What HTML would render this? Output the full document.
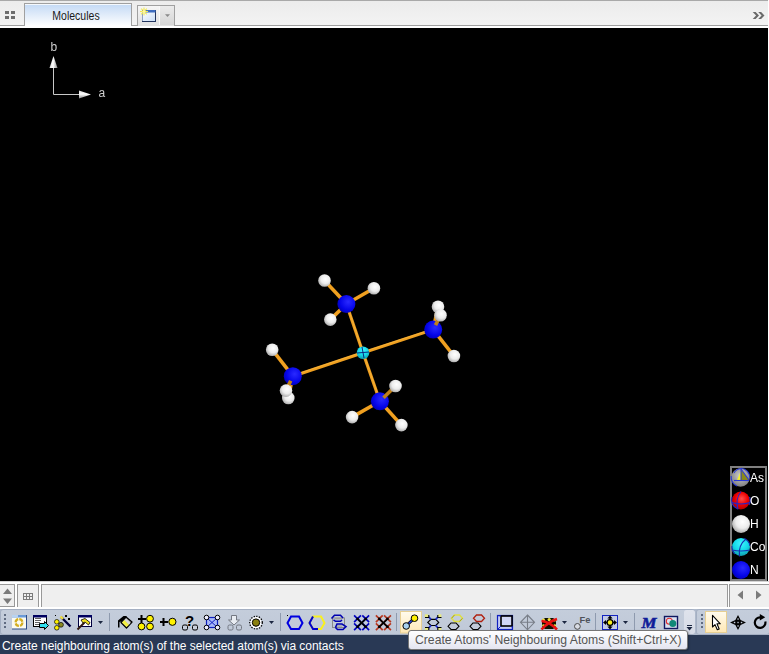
<!DOCTYPE html>
<html><head><meta charset="utf-8">
<style>
*{box-sizing:border-box;margin:0;padding:0}
html,body{width:769px;height:654px;overflow:hidden;background:#f0f0f0;font-family:"Liberation Sans",sans-serif}
.a{position:absolute}
#tabbar{left:0;top:0;width:769px;height:28px;background:linear-gradient(#ececec,#f4f4f4);border-top:1px solid #a9a9a9}
#tabline{left:0;top:25px;width:768px;height:1px;background:#a0a0a0}
#tabwhite{left:0;top:26px;width:769px;height:2px;background:#fff}
#tab{left:24px;top:3px;width:108px;height:23px;border:1px solid #a0a0a0;border-bottom:none;background:linear-gradient(#c3d9f5,#ffffff);box-shadow:inset 0 1px 0 #f4f8fd}
#tabt{left:0;top:8px;width:152px;font-size:12px;color:#1a1a1a;text-align:center;line-height:16px;white-space:nowrap;transform:scaleX(0.875);transform-origin:76px 0}
#view{left:0;top:28px;width:768px;height:553px;background:#000}
#rcol{left:768px;top:0;width:1px;height:581px;background:#fff}
#panel{left:0;top:581px;width:769px;height:28px;background:#fff;border-top:1px solid #d4d4d4}
.box{top:584px;height:23px;border:1px solid #999;border-bottom:none;background:#efefef}
#tb{left:0;top:609px;width:769px;height:26px;background:linear-gradient(#c8d1e0,#bcc7d8);border-top:1px solid #a9b6cb}
#status{left:0;top:635px;width:769px;height:19px;background:#293955;color:#fff;font-size:12px;line-height:23px;padding-left:2px;white-space:nowrap;letter-spacing:-0.05px}
#tip{left:408px;top:630px;width:280px;height:20px;border:1px solid #767676;border-radius:3px;background:linear-gradient(#ffffff,#e4e5f0);font-size:12.2px;color:#555;line-height:19.5px;padding-left:6px;white-space:nowrap;box-shadow:1px 1px 2px rgba(0,0,0,.3)}
</style></head><body>
<div id="tabbar" class="a"></div>
<div id="tabline" class="a"></div>
<div id="tabwhite" class="a"></div>
<!-- grid icon -->
<svg class="a" style="left:0;top:0" width="24" height="26"><g fill="#6e6e6e"><rect x="5" y="11" width="4" height="3"/><rect x="11" y="11" width="4" height="3"/><rect x="5" y="16" width="4" height="3"/><rect x="11" y="16" width="4" height="3"/></g></svg>
<div id="tab" class="a"></div><div id="tabt" class="a">Molecules</div>
<!-- new window button -->
<div class="a" style="left:137px;top:5px;width:38px;height:21px;border:1px solid #a0a0a0;border-bottom:none;background:linear-gradient(#f6f6f6,#e0e0e0)"></div>
<div class="a" style="left:159px;top:6px;width:15px;height:19px;background:linear-gradient(#ebebeb,#d6d6d6);border-left:1px solid #f8f8f8"></div>
<svg class="a" style="left:138px;top:6px" width="36" height="20">
 <defs><linearGradient id="wb" x1="0" y1="0" x2="1" y2="1"><stop offset="0" stop-color="#ffffff"/><stop offset="1" stop-color="#c8dcf6"/></linearGradient></defs>
 <rect x="4.5" y="4.5" width="13" height="11" fill="url(#wb)" stroke="#22345e"/>
 <line x1="4.5" y1="5" x2="4.5" y2="15" stroke="#8ea0c0"/>
 <rect x="5" y="4" width="12.5" height="2.5" fill="#3d6cc0"/>
 <g stroke="#f2ea50" stroke-width="1.1"><line x1="6" y1="1.5" x2="6" y2="9.5"/><line x1="2" y1="5.5" x2="10" y2="5.5"/><line x1="3.2" y1="2.7" x2="8.8" y2="8.3"/><line x1="8.8" y1="2.7" x2="3.2" y2="8.3"/></g>
 <circle cx="6" cy="5.5" r="1.5" fill="#fff8a0"/>
 <path d="M27 8.2 L32 8.2 L29.5 11 Z" fill="#8a8a8a"/>
</svg>
<!-- chevrons -->
<svg class="a" style="left:750px;top:10px" width="18" height="12"><path d="M2.7 2 L5.6 2 L9 5.5 L5.6 9 L2.7 9 L6.1 5.5 Z M8.2 2 L11.1 2 L14.5 5.5 L11.1 9 L8.2 9 L11.6 5.5 Z" fill="#6a6a6a"/></svg>

<div id="view" class="a"></div>
<div id="rcol" class="a"></div>
<svg class="a" style="left:0;top:28px;will-change:transform" width="768" height="553" viewBox="0 28 768 553">
 <defs>
  <radialGradient id="gH" cx="0.58" cy="0.38" r="0.72"><stop offset="0" stop-color="#ffffff"/><stop offset="0.5" stop-color="#ececec"/><stop offset="1" stop-color="#9a9a9a"/></radialGradient>
  <radialGradient id="gN" cx="0.6" cy="0.38" r="0.75"><stop offset="0" stop-color="#2a2aff"/><stop offset="0.6" stop-color="#0404e8"/><stop offset="1" stop-color="#0000a0"/></radialGradient>
  <radialGradient id="gCo" cx="0.5" cy="0.3" r="0.8"><stop offset="0" stop-color="#40f4ff"/><stop offset="0.5" stop-color="#14d8e8"/><stop offset="1" stop-color="#108a98"/></radialGradient>
  <radialGradient id="gO" cx="0.55" cy="0.4" r="0.7"><stop offset="0" stop-color="#ff5050"/><stop offset="0.5" stop-color="#ee0000"/><stop offset="1" stop-color="#900000"/></radialGradient>
  <radialGradient id="gAs" cx="0.5" cy="0.4" r="0.7"><stop offset="0" stop-color="#d0d0d0"/><stop offset="1" stop-color="#707070"/></radialGradient>
 </defs>
 <!-- axes -->
 <g stroke="#c8c8c8" stroke-width="1" fill="none"><line x1="53.5" y1="94.5" x2="53.5" y2="62"/><line x1="53.5" y1="94.5" x2="85" y2="94.5"/></g>
 <linearGradient id="ab" x1="0" y1="0" x2="1" y2="0"><stop offset="0" stop-color="#d8d8d8"/><stop offset="0.45" stop-color="#ffffff"/><stop offset="1" stop-color="#8a8a8a"/></linearGradient><linearGradient id="aa" x1="0" y1="0" x2="0" y2="1"><stop offset="0" stop-color="#d8d8d8"/><stop offset="0.45" stop-color="#ffffff"/><stop offset="1" stop-color="#8a8a8a"/></linearGradient>
 <path d="M53.5 56 L57.5 68 L49.5 68 Z" fill="url(#ab)"/>
 <path d="M91 94.5 L79 90.5 L79 98.5 Z" fill="url(#aa)"/>
 <text x="50.5" y="51" font-size="12" fill="#d0d0d0" font-family="Liberation Sans">b</text>
 <text x="98.5" y="97" font-size="12" fill="#d0d0d0" font-family="Liberation Sans">a</text>
 <!-- bonds -->
 <g stroke="#f0a020" stroke-width="3.1">
  <line x1="363" y1="352.7" x2="346.4" y2="304.0"/>
  <line x1="363" y1="352.7" x2="433.2" y2="329.6"/>
  <line x1="363" y1="352.7" x2="292.8" y2="376.2"/>
  <line x1="363" y1="352.7" x2="379.9" y2="401.3"/>
 </g>
 <g stroke="#f0a020" stroke-width="3.6">
  <line x1="346.4" y1="304.0" x2="324.5" y2="280.5"/>
  <line x1="346.4" y1="304.0" x2="373.9" y2="288.3"/>
  <line x1="346.4" y1="304.0" x2="330.3" y2="319.6"/>
  <line x1="433.2" y1="329.6" x2="438" y2="306.8"/>
  <line x1="433.2" y1="329.6" x2="453.9" y2="356"/>
  <line x1="292.8" y1="376.2" x2="272.2" y2="349.7"/>
  <line x1="292.8" y1="376.2" x2="288.3" y2="398"/>
  <line x1="379.9" y1="401.3" x2="352.1" y2="417.1"/>
  <line x1="379.9" y1="401.3" x2="401.4" y2="425.1"/>
 </g>
 <g stroke="#f8c050" stroke-width="1" opacity="0.5">
  <line x1="363" y1="351.9" x2="346.4" y2="303.2"/>
  <line x1="363" y1="351.9" x2="433.2" y2="328.8"/>
  <line x1="363" y1="351.9" x2="292.8" y2="375.4"/>
  <line x1="363" y1="351.9" x2="379.9" y2="400.5"/>
 </g>
 <!-- back H -->
 <circle cx="438" cy="306.8" r="6.3" fill="url(#gH)"/>
 <circle cx="288.3" cy="398" r="6.3" fill="url(#gH)"/>
 <!-- N atoms -->
 <circle cx="346.4" cy="304.0" r="9" fill="url(#gN)"/>
 <circle cx="433.2" cy="329.6" r="9" fill="url(#gN)"/>
 <circle cx="292.8" cy="376.2" r="9" fill="url(#gN)"/>
 <circle cx="379.9" cy="401.3" r="9" fill="url(#gN)"/>
 <g stroke="#c08018" stroke-width="3.6">
  <line x1="435.5" y1="325.1" x2="440.5" y2="315.3"/>
  <line x1="290.7" y1="380.7" x2="286" y2="390.6"/>
  <line x1="383.5" y1="397.8" x2="395.5" y2="386"/>
 </g>
 <!-- H atoms -->
 <circle cx="324.5" cy="280.5" r="6.3" fill="url(#gH)"/>
 <circle cx="373.9" cy="288.3" r="6.3" fill="url(#gH)"/>
 <circle cx="330.3" cy="319.6" r="6.3" fill="url(#gH)"/>
 <circle cx="440.5" cy="315.3" r="6.3" fill="url(#gH)"/>
 <circle cx="453.9" cy="356" r="6.3" fill="url(#gH)"/>
 <circle cx="272.2" cy="349.7" r="6.3" fill="url(#gH)"/>
 <circle cx="286" cy="390.6" r="6.3" fill="url(#gH)"/>
 <circle cx="395.5" cy="386" r="6.3" fill="url(#gH)"/>
 <circle cx="352.1" cy="417.1" r="6.3" fill="url(#gH)"/>
 <circle cx="401.4" cy="425.1" r="6.3" fill="url(#gH)"/>
 <!-- Co -->
 <circle cx="363" cy="352.7" r="6.3" fill="url(#gCo)"/>
 <g stroke="#0a2a80" stroke-width="1"><line x1="357" y1="353" x2="369" y2="352"/><line x1="362" y1="347" x2="364" y2="358"/></g>
 <!-- legend -->
 <rect x="731" y="467" width="35" height="113" fill="none" stroke="#808080" stroke-width="2"/>
 <circle cx="740.5" cy="477.5" r="9.3" fill="url(#gAs)"/>
 <path d="M741 469.5 L749 480 L741 480 Z" fill="#8c8a18"/>
 <path d="M741 470.5 L741 480 L737 480 Z" fill="#f4f030"/>
 <g fill="none" stroke="#2838d8" stroke-width="1.1"><path d="M741 468.2 A9.3 9.3 0 0 1 749.8 478"/><path d="M737 486 A9.3 9.3 0 0 1 731.2 476"/><line x1="734" y1="480.5" x2="749" y2="480.5"/><line x1="741" y1="469" x2="741" y2="480.5"/><line x1="741" y1="469" x2="749" y2="480"/><path d="M734 473 Q736 469 741 468.5"/></g>
 <circle cx="740.8" cy="500.5" r="9" fill="url(#gO)"/>
 <g fill="none" stroke="#2424c8" stroke-width="1.1"><path d="M732 497 A9 9 0 0 0 737 508.5" /><path d="M749.5 497 A9 9 0 0 1 749 505"/><path d="M732 502.5 Q741 505.5 750 502.5"/><path d="M741 491.5 Q735 499 738 509.5"/></g>
 <circle cx="741" cy="524" r="9" fill="url(#gH)"/>
 <circle cx="741" cy="547" r="9" fill="url(#gCo)"/>
 <g fill="none" stroke="#1830b0" stroke-width="1.1"><path d="M732 550 Q741 552 750 550"/><path d="M746 539 Q738 545 739.5 556.5"/><path d="M732 546 A9 9 0 0 0 735 554"/><path d="M744 538.5 A9 9 0 0 1 750 546"/></g>
 <circle cx="741" cy="570" r="9" fill="url(#gN)"/>
 <g font-size="12" fill="#ffffff" font-family="Liberation Sans">
  <text x="750" y="482">As</text><text x="750" y="505">O</text><text x="750" y="528">H</text><text x="750" y="551">Co</text><text x="750" y="574">N</text>
 </g>
</svg>

<div id="panel" class="a"></div>
<div class="a box" style="left:0;width:15px;border-left:none;border-bottom:1px solid #999"></div>
<div class="a box" style="left:17px;width:22px"></div>
<div class="a box" style="left:41px;width:687px"></div>
<div class="a box" style="left:729px;width:40px;border-right:none"></div>
<svg class="a" style="left:0;top:584px" width="769" height="23">
 <path d="M3 10 L7.5 4.5 L12 10 Z M3 14.5 L12 14.5 L7.5 20 Z" fill="#7b7b7b"/>
 <g fill="none" stroke="#7b7b7b" stroke-width="1"><rect x="23.5" y="9.5" width="9" height="6"/><line x1="26.5" y1="9.5" x2="26.5" y2="15.5"/><line x1="29.5" y1="9.5" x2="29.5" y2="15.5"/><line x1="23.5" y1="12.5" x2="32.5" y2="12.5"/></g>
 <path d="M743 6.5 L743 15.5 L737.5 11 Z M756 6.5 L756 15.5 L761.5 11 Z" fill="#7b7b7b"/>
</svg>

<div id="tb" class="a"></div>
<svg class="a" style="left:0;top:609px" width="769" height="26" viewBox="0 609 769 26">
 <defs>
  <linearGradient id="tbg" x1="0" y1="0" x2="0" y2="1"><stop offset="0" stop-color="#c4cddb"/><stop offset="1" stop-color="#c0c9d8"/></linearGradient>
  <linearGradient id="hot" x1="0" y1="0" x2="0" y2="1"><stop offset="0" stop-color="#fffbee"/><stop offset="1" stop-color="#ffe8b4"/></linearGradient>
  <linearGradient id="ov" x1="0" y1="0" x2="0" y2="1"><stop offset="0" stop-color="#dfe3ec"/><stop offset="1" stop-color="#d6dbe6"/></linearGradient>
 </defs>
 <rect x="0" y="609" width="769" height="26" fill="#aeb9cb"/>
 <rect x="0.5" y="609.5" width="694" height="25" rx="2.5" fill="url(#tbg)" stroke="#a4afc2"/>
 <rect x="684" y="610" width="11" height="24" rx="2.5" fill="url(#ov)"/>
 <rect x="696.5" y="609.5" width="73" height="25" rx="2.5" fill="url(#tbg)" stroke="#a4afc2"/>
 <!-- grips -->
 <g fill="#5f6b80"><rect x="4" y="614" width="2" height="2"/><rect x="4" y="618" width="2" height="2"/><rect x="4" y="622" width="2" height="2"/><rect x="4" y="626" width="2" height="2"/>
 <rect x="701" y="614" width="2" height="2"/><rect x="701" y="618" width="2" height="2"/><rect x="701" y="622" width="2" height="2"/><rect x="701" y="626" width="2" height="2"/></g>
 <!-- separators -->
 <g stroke="#8e9aae" stroke-width="1"><line x1="109.5" y1="613" x2="109.5" y2="631"/><line x1="280.5" y1="613" x2="280.5" y2="631"/><line x1="396.5" y1="613" x2="396.5" y2="631"/><line x1="490.5" y1="613" x2="490.5" y2="631"/><line x1="595.5" y1="613" x2="595.5" y2="631"/><line x1="634.5" y1="613" x2="634.5" y2="631"/></g>
 <!-- hot buttons -->
 <rect x="400.5" y="611.5" width="21" height="21.5" fill="url(#hot)" stroke="#e6cf93"/>
 <rect x="705.5" y="611.5" width="21" height="21" fill="url(#hot)" stroke="#e6cf93"/>
 <!-- dropdown arrows -->
 <g fill="#1b2640"><path d="M98 621 L103 621 L100.5 624 Z"/><path d="M269 621 L274 621 L271.5 624 Z"/><path d="M562 621 L567 621 L564.5 624 Z"/><path d="M623 621 L628 621 L625.5 624 Z"/></g>
 <!-- overflow -->
 <g fill="#1b2640"><rect x="687" y="625" width="5" height="1"/><path d="M686.5 627 L692.5 627 L689.5 630.5 Z"/></g>
 <!-- icon1 refresh window -->
 <rect x="12" y="615" width="15" height="14.5" fill="#2c4a86"/>
 <rect x="12" y="615" width="14" height="13.5" fill="#fbfbf0"/>
 <rect x="12" y="615" width="14" height="2.5" fill="#6a9ad8"/>
 <rect x="12" y="615" width="6" height="2.5" fill="#b8d2f0"/>
 <circle cx="19" cy="622.5" r="3.4" fill="none" stroke="#d4ae20" stroke-width="2.2" stroke-dasharray="4.2 1.1"/>
 <!-- icon2 window arrow -->
 <rect x="33.5" y="615.5" width="13" height="11" fill="#fff" stroke="#000"/>
 <rect x="33" y="615" width="14" height="2.5" fill="#000060"/>
 <g stroke="#606060"><line x1="35" y1="618.5" x2="41" y2="618.5"/><line x1="35" y1="620.5" x2="41" y2="620.5"/><line x1="35" y1="622.5" x2="40" y2="622.5"/><line x1="35" y1="624.5" x2="40" y2="624.5"/></g>
 <path d="M39.5 623.5 L44.5 623.5 L44.5 621.5 L48.5 625.5 L44.5 629.5 L44.5 627.5 L39.5 627.5 Z" fill="#30e0f0" stroke="#000" stroke-width="1"/>
 <!-- icon3 wand -->
 <g stroke="#000" stroke-width="0.7"><circle cx="56.8" cy="621.8" r="2.3" fill="#fff200"/><circle cx="56.8" cy="627.8" r="2.3" fill="#fff200"/><circle cx="61" cy="624.8" r="2.4" fill="#8a8a20"/></g>
 <line x1="61" y1="617" x2="70.5" y2="626.5" stroke="#000040" stroke-width="2.4"/>
 <line x1="60.5" y1="616.5" x2="63" y2="619" stroke="#f0e040" stroke-width="2.4"/>
 <g fill="#000"><rect x="65" y="615" width="2" height="2"/><rect x="68" y="618" width="2" height="2"/><rect x="55" y="615" width="1" height="1"/></g>
 <!-- icon4 hammer window -->
 <rect x="78.5" y="615.5" width="13" height="11" fill="#fff" stroke="#000040"/>
 <rect x="78" y="615" width="14" height="2.5" fill="#000060"/>
 <line x1="77.5" y1="629.5" x2="84.5" y2="622.5" stroke="#301810" stroke-width="2"/>
 <path d="M81 620 L85 618.5 L90 622.5 L88.5 625 L85 622 L83 623 Z" fill="#f0e020" stroke="#000" stroke-width="0.8"/>
 <!-- icon5 eraser -->
 <path d="M118 627.5 L118 620.5 L123.5 616 L127 616 L121.5 621.5 L119.5 622 L119.5 627.5 Z" fill="#000"/>
 <path d="M121 622.5 L126 617 L132 622 L126.5 628 Z" fill="#a8a8a8" stroke="#000" stroke-width="1.3" stroke-linejoin="round"/>
 <path d="M122 622.5 L124.5 620 L129 624.7 L126.5 627 Z" fill="#f2f040"/>
 <path d="M124.5 620 L126 618.5 L130.5 623 L129 624.7 Z" fill="#d8d8d8"/>
 <!-- icon6 plus atoms -->
 <g stroke="#000" stroke-width="1"><circle cx="150" cy="618.7" r="3.4" fill="#fff200"/><circle cx="141.5" cy="626.5" r="3.4" fill="#fff200"/><circle cx="150" cy="626.5" r="3.4" fill="#fff200"/></g>
 <g fill="#000"><rect x="138" y="618" width="8" height="2"/><rect x="140.5" y="615" width="2" height="8"/></g>
 <!-- icon7 +o -->
 <g fill="#000"><rect x="160" y="621" width="8" height="2"/><rect x="162.5" y="618" width="2" height="8"/></g>
 <circle cx="172.4" cy="621.8" r="3.6" fill="#fff200" stroke="#000"/>
 <!-- icon8 ?oo -->
 <text x="185" y="625.5" font-family="Liberation Sans" font-weight="bold" font-size="15" fill="#000">?</text>
 <g fill="#c8cfdc" stroke="#000" stroke-width="1"><rect x="182.5" y="625" width="5" height="5" rx="1.5"/><rect x="192.5" y="625" width="5" height="5" rx="1.5"/></g>
 <!-- icon9 blue box -->
 <rect x="206.5" y="617.5" width="11" height="10" fill="#a8b8f8" stroke="#1020c0" stroke-width="1.2"/>
 <g stroke="#1020c0"><line x1="206.5" y1="617.5" x2="217.5" y2="627.5"/><line x1="217.5" y1="617.5" x2="206.5" y2="627.5"/></g>
 <g fill="#eef" stroke="#000" stroke-width="1"><circle cx="206.5" cy="617.5" r="2.3"/><circle cx="217.5" cy="617.5" r="2.3"/><circle cx="206.5" cy="627.5" r="2.3"/><circle cx="217.5" cy="627.5" r="2.3"/></g>
 <!-- icon10 disabled -->
 <path d="M231.5 615.5 L236.5 615.5 L236.5 620 L239.5 620 L234 625 L228.5 620 L231.5 620 Z" fill="#e8ecf2" stroke="#737882"/>
 <g fill="none" stroke="#737882"><rect x="228" y="625" width="5" height="5" rx="1.5"/><rect x="236.5" y="625" width="5" height="5" rx="1.5"/></g>
 <!-- icon11 dotted circle -->
 <circle cx="256" cy="622.6" r="5.8" fill="#fff"/><circle cx="256" cy="622.6" r="6.3" fill="none" stroke="#000" stroke-width="1.3" stroke-dasharray="1.3 1.35"/>
 <circle cx="256" cy="622.6" r="3.7" fill="#8a8010" stroke="#000" stroke-width="1"/>
 <!-- hexagons -->
 <path d="M291 616.5 L299 616.5 L302.5 623 L299 629 L291 629 L287.5 623 Z" fill="none" stroke="#0000e0" stroke-width="2"/>
 <rect x="287" y="615" width="1" height="1" fill="#000"/>
 <path d="M313 616.5 L321 616.5 L324.5 623 L321 629 L313 629 L309.5 623 Z" fill="none" stroke="#f8f020" stroke-width="2"/>
 <path d="M313 616.5 L309.5 623 L313 629 L318 629" fill="none" stroke="#0000d0" stroke-width="2"/>
 <!-- stacked hex -->
 <rect x="332.5" y="618" width="12" height="9.5" fill="none" stroke="#8a8a8a" stroke-width="1"/>
 <g stroke="#9a9a9a" stroke-width="1.2"><line x1="335" y1="618.8" x2="342" y2="618.8"/><line x1="337" y1="626" x2="342" y2="626"/></g>
 <path d="M331.5 618.5 L334.5 615.3 L340.5 615.3 L343 618 M333.5 619.8 L335.5 621.3 L340.5 621.3 L342 620 M335.5 627.5 L337 624 L342 624 L346 626.6 L343 629.5 L337.5 629.5 L335.5 627.5" fill="none" stroke="#0000b0" stroke-width="1.6"/>
 <!-- XX -->
<g stroke="#0000c0" stroke-width="1.7"><line x1="354.1" y1="615.4" x2="360.9" y2="622.1999999999999"/><line x1="360.9" y1="615.4" x2="354.1" y2="622.1999999999999"/><line x1="362.3" y1="615.4" x2="369.09999999999997" y2="622.1999999999999"/><line x1="369.09999999999997" y1="615.4" x2="362.3" y2="622.1999999999999"/><line x1="354.1" y1="623.4" x2="360.9" y2="630.1999999999999"/><line x1="360.9" y1="623.4" x2="354.1" y2="630.1999999999999"/><line x1="362.3" y1="623.4" x2="369.09999999999997" y2="630.1999999999999"/><line x1="369.09999999999997" y1="623.4" x2="362.3" y2="630.1999999999999"/></g><g stroke="#000" stroke-width="1.7"><line x1="357.5" y1="618.8" x2="365.7" y2="626.8"/><line x1="365.7" y1="618.8" x2="357.5" y2="626.8"/></g><g fill="#000"><rect x="356.3" y="617.5999999999999" width="2.4" height="2.4"/><rect x="364.5" y="617.5999999999999" width="2.4" height="2.4"/><rect x="356.3" y="625.5999999999999" width="2.4" height="2.4"/><rect x="364.5" y="625.5999999999999" width="2.4" height="2.4"/></g>
<g stroke="#b83820" stroke-width="1.7"><line x1="375.90000000000003" y1="615.4" x2="382.7" y2="622.1999999999999"/><line x1="382.7" y1="615.4" x2="375.90000000000003" y2="622.1999999999999"/><line x1="384.1" y1="615.4" x2="390.9" y2="622.1999999999999"/><line x1="390.9" y1="615.4" x2="384.1" y2="622.1999999999999"/><line x1="375.90000000000003" y1="623.4" x2="382.7" y2="630.1999999999999"/><line x1="382.7" y1="623.4" x2="375.90000000000003" y2="630.1999999999999"/><line x1="384.1" y1="623.4" x2="390.9" y2="630.1999999999999"/><line x1="390.9" y1="623.4" x2="384.1" y2="630.1999999999999"/></g><g stroke="#000" stroke-width="1.7"><line x1="379.3" y1="618.8" x2="387.5" y2="626.8"/><line x1="387.5" y1="618.8" x2="379.3" y2="626.8"/></g><g fill="#000"><rect x="378.1" y="617.5999999999999" width="2.4" height="2.4"/><rect x="386.3" y="617.5999999999999" width="2.4" height="2.4"/><rect x="378.1" y="625.5999999999999" width="2.4" height="2.4"/><rect x="386.3" y="625.5999999999999" width="2.4" height="2.4"/></g>
 <!-- ball-stick hot icon -->
 <line x1="406" y1="626" x2="414.5" y2="618" stroke="#000" stroke-width="3"/>
 <line x1="406" y1="626" x2="414.5" y2="618" stroke="#2040e0" stroke-width="1.5"/>
 <circle cx="414.5" cy="618.2" r="3.3" fill="#fff200" stroke="#000"/>
 <circle cx="406.2" cy="626" r="3.3" fill="#a8d0f0" stroke="#000"/>
 <!-- benzene -->
 <g fill="#eef070" opacity="0.85"><rect x="424.8" y="614.3" width="3.4" height="3"/><rect x="438" y="614.3" width="3.4" height="3"/><rect x="424.8" y="627.8" width="3.4" height="3"/><rect x="438" y="627.8" width="3.4" height="3"/></g>
 <path d="M427.8 622.4 L430.9 619.3 L435.8 619.3 L438.7 622.4 L435.8 625.5 L430.9 625.5 Z" fill="none" stroke="#000" stroke-width="1.2"/>
 <g stroke="#2030d0" stroke-width="1.8"><line x1="431" y1="619.5" x2="428.7" y2="616.8"/><line x1="435.7" y1="619.5" x2="438" y2="616.8"/><line x1="431" y1="625.3" x2="428.7" y2="628"/><line x1="435.7" y1="625.3" x2="438" y2="628"/></g>
 <path d="M425 617.5 L428.8 617.5 M428.8 615 L428.8 618 M437.8 617.5 L441.5 617.5 M437.8 615 L437.8 618 M425 627.5 L428.8 627.5 M428.8 627 L428.8 630 M437.8 627.5 L441.5 627.5 M437.8 627 L437.8 630" fill="none" stroke="#000" stroke-width="1.1"/>
 <!-- yellow/black hex -->
 <path d="M451.5 618.3 L454.5 615 L459.5 615 L462.5 618.3 L459.5 621.5 L454.5 621.5 Z" fill="none" stroke="#e0e040" stroke-width="1.4"/>
 <path d="M451.5 618.3 L454.5 615 M459.5 621.5 L462.5 618.3" fill="none" stroke="#8a8a20" stroke-width="0.7"/>
 <path d="M448 626.3 L451 623 L456 623 L459 626.3 L456 629.5 L451 629.5 Z" fill="none" stroke="#000" stroke-width="1.1"/>
 <path d="M473.5 618.3 L476.5 615 L481.5 615 L484.5 618.3 L481.5 621.5 L476.5 621.5 Z" fill="none" stroke="#b02010" stroke-width="1.3"/>
 <path d="M470 626.3 L473 623 L478 623 L481 626.3 L478 629.5 L473 629.5 Z" fill="none" stroke="#000" stroke-width="1.1"/>
 <!-- cube -->
 <rect x="497.5" y="615.5" width="15" height="14" fill="#c4ccf4" stroke="#1020c0" stroke-width="1.2"/>
 <rect x="501" y="616" width="11" height="10" fill="#d0d6f6" stroke="#000" stroke-width="1.6"/>
 <g stroke="#1020c0" stroke-width="1"><line x1="497.5" y1="629.5" x2="501" y2="626"/><line x1="512.5" y1="629.5" x2="512" y2="626"/><line x1="497.5" y1="615.5" x2="501" y2="616"/></g>
 <!-- diamond disabled -->
 <path d="M527.5 615 L534.5 622.3 L527.5 629.8 L520.5 622.3 Z M521 622.3 L534 622.3 M527.5 615 L527.5 629.8" fill="none" stroke="#787e88" stroke-width="1.1"/>
 <!-- red x checkered -->
 <path d="M542 620 L545 618 L553 618 L556 620 L556 627 L553 629 L545 629 L542 627 Z" fill="#101000"/>
 <g fill="#f0e040"><circle cx="543.5" cy="620.2" r="1.6"/><circle cx="549.2" cy="619.6" r="1.6"/><circle cx="554.8" cy="620.2" r="1.3"/><circle cx="543.5" cy="625.6" r="1.3"/><circle cx="554.8" cy="625.6" r="1.3"/><circle cx="549.2" cy="623" r="1.2"/></g>
 <path d="M541.5 621 Q549 621.5 557 629.5 M541.5 629.5 Q548 622 557 619" fill="none" stroke="#e81010" stroke-width="2.6"/>
 <!-- Fe -->
 <text x="579.6" y="622.8" font-family="Liberation Sans" font-weight="bold" font-size="9.3" fill="#4e525a">Fe</text>
 <circle cx="577.4" cy="626.4" r="2.9" fill="#d8dce4" stroke="#4a4a4a"/>
 <!-- move box -->
 <rect x="602.5" y="615.5" width="15" height="14" fill="#c4cce6" stroke="#1424c0"/>
 <g fill="#000"><path d="M610 615.6 L612.6 618.6 L607.4 618.6 Z"/><path d="M610 629.4 L612.6 626.4 L607.4 626.4 Z"/><path d="M603 622.5 L606 619.9 L606 625.1 Z"/><path d="M617 622.5 L614 619.9 L614 625.1 Z"/></g><g stroke="#000" stroke-width="1.6"><line x1="610" y1="618" x2="610" y2="627"/><line x1="605.5" y1="622.5" x2="614.5" y2="622.5"/></g>
 <circle cx="610" cy="622.5" r="2.9" fill="#f8f020" stroke="#000" stroke-width="1.3"/>
 <!-- M -->
 <text x="641.5" y="627.6" font-family="Liberation Serif" font-weight="bold" font-style="italic" font-size="14" fill="#101c98" stroke="#101c98" stroke-width="0.5" textLength="15" lengthAdjust="spacingAndGlyphs">M</text>
 <!-- circles box -->
 <rect x="664.5" y="616.5" width="13" height="12" fill="#dae2f2" stroke="#101860" stroke-width="1.4"/>
 <circle cx="669.3" cy="621.3" r="3" fill="none" stroke="#e03030" stroke-width="1.1"/>
 <circle cx="672.8" cy="623.5" r="3.5" fill="#108878"/>
 <!-- pointer -->
 <path d="M712.5 615.3 L712.5 627 L715 624.6 L717.3 629.8 L719.2 629 L717 623.8 L720.3 623.8 Z" fill="#fff" stroke="#000" stroke-width="1.1" stroke-linejoin="round"/>
 <!-- move cross -->
 <path d="M738 615 L740.6 619.9 L746 622.5 L740.6 625.1 L738 630 L735.4 625.1 L730 622.5 L735.4 619.9 Z" fill="#000"/>
 <g fill="#c4ccda"><rect x="737.4" y="618.3" width="1.3" height="1.5"/><rect x="737.4" y="621.8" width="1.3" height="1.4"/><rect x="737.4" y="625.2" width="1.3" height="1.5"/><rect x="733.8" y="621.8" width="1.5" height="1.4"/><rect x="740.8" y="621.8" width="1.5" height="1.4"/></g>
 <!-- rotate -->
 <path d="M760.5 617.3 A5.3 5.3 0 1 0 765.3 621.5" fill="none" stroke="#000" stroke-width="2.2"/>
 <path d="M759.8 614 L765.2 617.3 L759.8 620.5 Z" fill="#000"/>
</svg>
<div id="status" class="a">Create neighbouring atom(s) of the selected atom(s) via contacts</div>
<div id="tip" class="a">Create Atoms' Neighbouring Atoms (Shift+Ctrl+X)</div>
</body></html>
